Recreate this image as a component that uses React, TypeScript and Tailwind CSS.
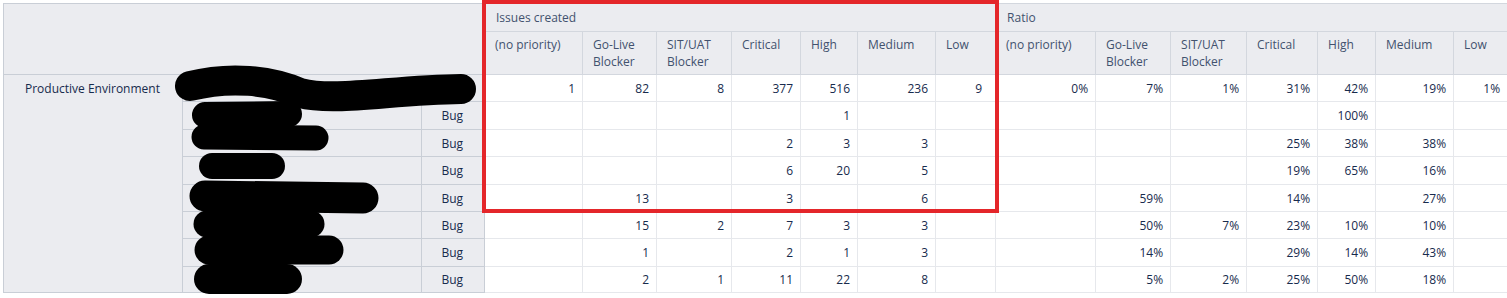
const priorities = [
    ["(no priority)"],
    ["Go-Live", "Blocker"],
    ["SIT/UAT", "Blocker"],
    ["Critical"],
    ["High"],
    ["Medium"],
    ["Low"],
];

const issueRows = [
    ["1", "82", "8", "377", "516", "236", "9"],
    ["", "", "", "", "1", "", ""],
    ["", "", "", "2", "3", "3", ""],
    ["", "", "", "6", "20", "5", ""],
    ["", "13", "", "3", "", "6", ""],
    ["", "15", "2", "7", "3", "3", ""],
    ["", "1", "", "2", "1", "3", ""],
    ["", "2", "1", "11", "22", "8", ""],
];

const ratioRows = [
    ["0%", "7%", "1%", "31%", "42%", "19%", "1%"],
    ["", "", "", "", "100%", "", ""],
    ["", "", "", "25%", "38%", "38%", ""],
    ["", "", "", "19%", "65%", "16%", ""],
    ["", "59%", "", "14%", "", "27%", ""],
    ["", "50%", "7%", "23%", "10%", "10%", ""],
    ["", "14%", "", "29%", "14%", "43%", ""],
    ["", "5%", "2%", "25%", "50%", "18%", ""],
];

const rowHeights = ["h-[27px]", "h-[28px]", "h-[27px]", "h-[28px]", "h-[27px]", "h-[27px]", "h-[28px]", "h-[26px]"];

const colWidths = [179, 239, 63, 98, 74, 75, 69, 57, 78, 60, 100, 75, 76, 71, 58, 78, 60];

// black marker strokes over the names
const scribbles = [
    { d: "M190 86 C 230 76, 270 80, 300 93 C 335 102, 390 90, 461 89", w: 30 },
    { d: "M205 115 L 289 114", w: 26 },
    { d: "M204 137 L 316 138", w: 25 },
    { d: "M212 166 L 272 166", w: 26 },
    { d: "M205 196 L 363 198", w: 31 },
    { d: "M207 224 L 311 224", w: 27 },
    { d: "M209 250 L 329 250", w: 29 },
    { d: "M209 279 L 287 279", w: 30 },
];

const DataCells = ({ values }: { values: string[] }) => (
    <>
        {values.map((v, i) => (
            <td
                key={i}
                className={`border border-[#e6e8ec] bg-white text-right align-middle text-[#172b4d] ${
                    i === 6 ? "pr-[13px]" : "pr-[7px]"
                }`}
            >
                {v}
            </td>
        ))}
    </>
);

const App = () => {
    return (
        <div
            className="relative h-[298px] w-[1507px] overflow-hidden bg-white pl-[3px] pt-[3px] text-[12px] leading-[17px]"
            style={{ fontFamily: '"Open Sans", "Noto Sans", sans-serif' }}
        >
            <table className="table-fixed border-collapse" style={{ width: 1510 }}>
                <colgroup>
                    {colWidths.map((w, i) => (
                        <col key={i} style={{ width: w }} />
                    ))}
                </colgroup>

                <thead>
                    <tr className="h-[28px]">
                        <th
                            rowSpan={2}
                            colSpan={3}
                            className="border border-[#c9ced6] bg-[#ebecf0]"
                        />
                        <th
                            colSpan={7}
                            className="border border-[#d3d7de] bg-[#ebecf0] pl-[11px] text-left align-middle font-normal text-[#42526e]"
                        >
                            Issues created
                        </th>
                        <th
                            colSpan={7}
                            className="border border-[#d3d7de] bg-[#ebecf0] pl-[11px] text-left align-middle font-normal text-[#42526e]"
                        >
                            Ratio
                        </th>
                    </tr>
                    <tr className="h-[43px]">
                        {[...priorities, ...priorities].map((p, i) => (
                            <th
                                key={i}
                                className="border border-[#d3d7de] bg-[#ebecf0] pl-[10px] pt-[4px] text-left align-top font-normal text-[#42526e]"
                            >
                                {p.map((line) => (
                                    <div key={line}>{line}</div>
                                ))}
                            </th>
                        ))}
                    </tr>
                </thead>

                <tbody>
                    {issueRows.map((row, r) => (
                        <tr key={r} className={rowHeights[r]}>
                            {r === 0 && (
                                <td
                                    rowSpan={8}
                                    className="border border-[#c9ced6] bg-[#ebecf0] pl-[21px] pt-[5px] text-left align-top text-[#172b4d]"
                                >
                                    Productive Environment
                                </td>
                            )}
                            {r === 0 ? (
                                <td colSpan={2} className="border border-[#c9ced6] bg-[#ebecf0]" />
                            ) : (
                                <>
                                    <td className="border border-[#c9ced6] bg-[#ebecf0]" />
                                    <td className="border border-[#c9ced6] bg-[#ebecf0] pr-[21px] text-right text-[#172b4d]">
                                        Bug
                                    </td>
                                </>
                            )}
                            <DataCells values={row} />
                            <DataCells values={ratioRows[r]} />
                        </tr>
                    ))}
                </tbody>
            </table>

            {/* Redactions */}
            <svg className="pointer-events-none absolute left-0 top-0" width={1507} height={298}>
                {scribbles.map((s, i) => (
                    <path
                        key={i}
                        d={s.d}
                        fill="none"
                        stroke="#000"
                        strokeWidth={s.w}
                        strokeLinecap="round"
                        strokeLinejoin="round"
                    />
                ))}
            </svg>

            {/* Highlight box */}
            <div className="pointer-events-none absolute left-[482px] top-0 h-[213px] w-[517px] border-4 border-[#e4262a]" />
        </div>
    );
};

export default App;
